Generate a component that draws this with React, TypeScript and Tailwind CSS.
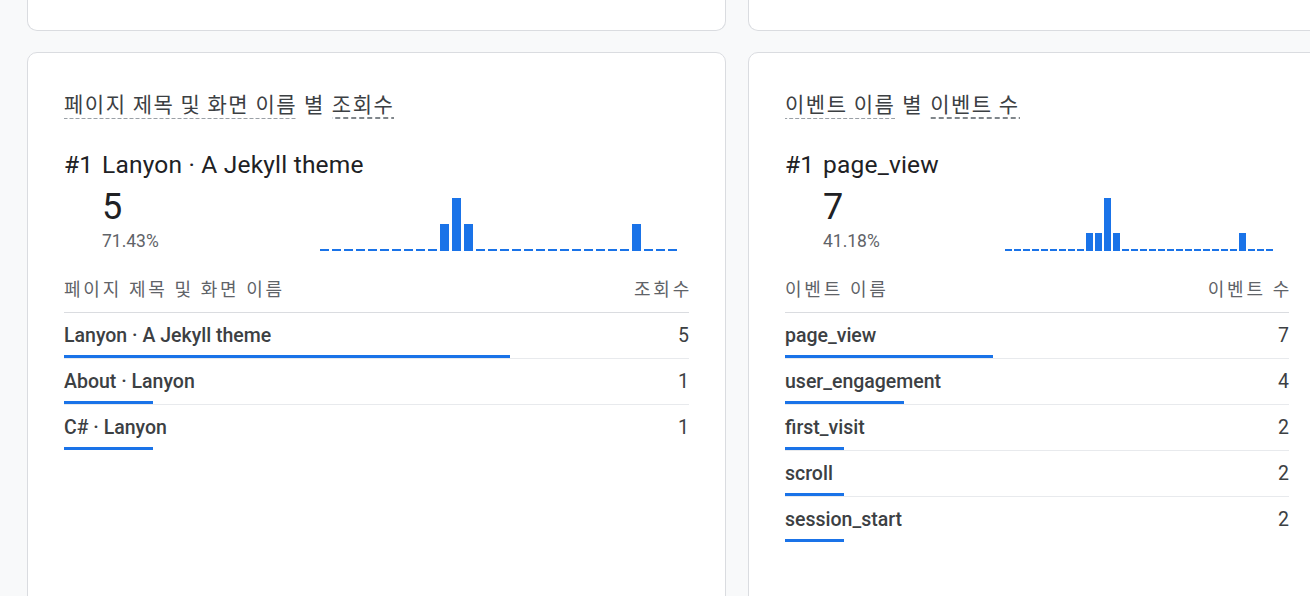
import React from 'react';

type Row = { label: string; value: number };

type Panel = {
  dim: string;
  metric: string;
  headDim: string;
  headMetric: string;
  top: string;
  total: number;
  percent: string;
  series: number[];
  rows: Row[];
  cardW: string;
  chartW: string;
  barW: string;
  barGap: string;
  chartMr: string;
};

const leftSeries = Array.from({ length: 30 }, (_, i) => (i === 11 ? 2 : i === 10 || i === 12 || i === 26 ? 1 : 0));
const rightSeries = Array.from({ length: 30 }, (_, i) => (i === 11 ? 3 : i === 9 || i === 10 || i === 12 || i === 26 ? 1 : 0));

const panels: Panel[] = [
  {
    dim: '페이지 제목 및 화면 이름',
    metric: '조회수',
    headDim: '페이지 제목 및 화면 이름',
    headMetric: '조회수',
    top: 'Lanyon · A Jekyll theme',
    total: 5,
    percent: '71.43%',
    series: leftSeries,
    rows: [
      { label: 'Lanyon · A Jekyll theme', value: 5 },
      { label: 'About · Lanyon', value: 1 },
      { label: 'C# · Lanyon', value: 1 },
    ],
    cardW: 'w-[699px]',
    chartW: 'w-[357px]',
    barW: 'w-[9px]',
    barGap: 'gap-[3px]',
    chartMr: 'mr-[12px]',
  },
  {
    dim: '이벤트 이름',
    metric: '이벤트 수',
    headDim: '이벤트 이름',
    headMetric: '이벤트 수',
    top: 'page_view',
    total: 7,
    percent: '41.18%',
    series: rightSeries,
    rows: [
      { label: 'page_view', value: 7 },
      { label: 'user_engagement', value: 4 },
      { label: 'first_visit', value: 2 },
      { label: 'scroll', value: 2 },
      { label: 'session_start', value: 2 },
    ],
    cardW: 'w-[578px]',
    chartW: 'w-[268px]',
    barW: 'w-[7px]',
    barGap: 'gap-[2px]',
    chartMr: 'mr-[16px]',
  },
];

const kr = "font-['Noto_Sans_CJK_KR',sans-serif]";
const roboto = "font-['Roboto','Noto_Sans_CJK_KR',sans-serif]";

function Sparkline({ p }: { p: Panel }) {
  const max = Math.max(...p.series);
  return (
    <div className={`flex items-end h-[53px] ${p.chartW} ${p.barGap} ${p.chartMr}`}>
      {p.series.map((v, i) => (
        <div
          key={i}
          className={`${p.barW} bg-[#1a73e8]`}
          style={{ height: v === 0 ? 2 : Math.round((v / max) * 53) }}
        />
      ))}
    </div>
  );
}

function Card({ p }: { p: Panel }) {
  const sum = p.rows.reduce((a, r) => a + r.value, 0);
  return (
    <div className={`${p.cardW} shrink-0 h-[560px] bg-white border border-[#dadce0] rounded-[10px] px-[36px] pt-[36px]`}>
      {/* title */}
      <div className={`${kr} text-[21px] leading-[28px] tracking-[1.5px] text-[#3c4043] flex gap-[7px]`}>
        <span className="pb-[2px] bg-[linear-gradient(to_right,#9aa0a6_4px,transparent_4px)] bg-[length:6px_1px] bg-repeat-x bg-bottom">
          {p.dim}
        </span>
        <span>별</span>
        <span className="pb-[2px] bg-[linear-gradient(to_right,#80868b_5px,transparent_5px)] bg-[length:8px_2px] bg-repeat-x bg-bottom">
          {p.metric}
        </span>
      </div>

      {/* top item */}
      <div className={`${roboto} mt-[31px] flex text-[24.5px] leading-[30px] tracking-[0.2px] text-[#202124]`}>
        <span className="w-[38px]">#1</span>
        <span>{p.top}</span>
      </div>

      <div className="flex items-end justify-between">
        <div className={`${roboto} pl-[38px]`}>
          <div className="mt-[7px] text-[36px] leading-[40px] text-[#202124]">{p.total}</div>
          <div className="mt-[4px] text-[17.5px] leading-[20px] text-[#5f6368]">{p.percent}</div>
        </div>
        <Sparkline p={p} />
      </div>

      {/* table */}
      <div className={`${kr} mt-[25px] pb-[12px] flex justify-between text-[18px] leading-[24px] tracking-[2.8px] text-[#5f6368] border-b border-[#dadce0]`}>
        <span>{p.headDim}</span>
        <span className="-mr-[3px]">{p.headMetric}</span>
      </div>
      {p.rows.map((r, i) => (
        <div
          key={r.label}
          className={`pt-[11px] ${i < p.rows.length - 1 ? 'border-b border-[#e8eaed]' : ''}`}
        >
          <div className={`${roboto} flex justify-between text-[19.5px] leading-[24px] text-[#3c4043]`}>
            <span className="font-medium">{r.label}</span>
            <span>{r.value}</span>
          </div>
          <div className="mt-[7px] h-[3px] bg-[#1a73e8]" style={{ width: `${(r.value / sum) * 100}%` }} />
        </div>
      ))}
    </div>
  );
}

export default function App() {
  return (
    <div className="w-[1310px] h-[596px] overflow-hidden bg-[#f8f9fa] pl-[27px]">
      <div className="flex gap-[22px]">
        {panels.map((p) => (
          <div
            key={p.dim}
            className={`${p.cardW} shrink-0 h-[31px] bg-white border border-t-0 border-[#dadce0] rounded-b-[10px]`}
          />
        ))}
      </div>
      <div className="mt-[21px] flex gap-[22px]">
        {panels.map((p) => (
          <Card key={p.dim} p={p} />
        ))}
      </div>
    </div>
  );
}
